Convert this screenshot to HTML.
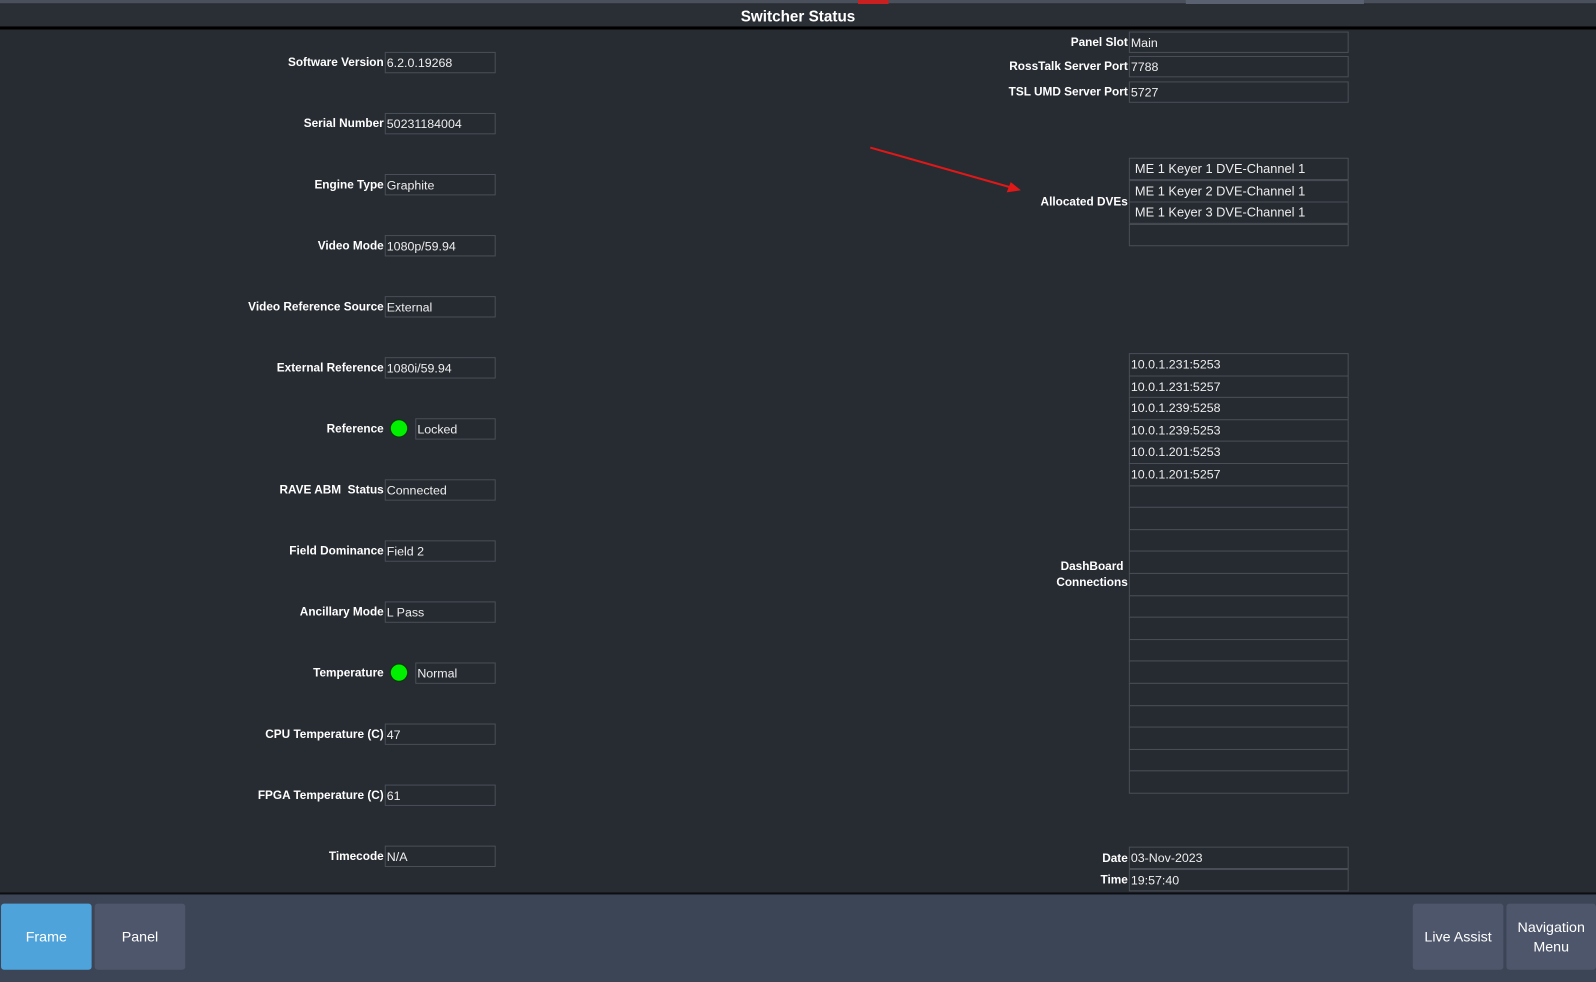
<!DOCTYPE html>
<html><head><meta charset="utf-8"><style>
html,body{margin:0;padding:0;width:1596px;height:982px;overflow:hidden;background:#272b32;}
#w{position:absolute;left:0;top:0;width:1568px;height:965px;transform:scale(1.01786,1.0176);transform-origin:0 0;background:#272b32;font-family:"Liberation Sans",sans-serif;color:#fff;}
.a{position:absolute;}
.lbl{position:absolute;font-weight:bold;font-size:11.6px;text-align:right;white-space:nowrap;line-height:14px;}
.f{position:absolute;box-sizing:border-box;border:1px solid #4a4f57;background:#262a31;font-size:12.2px;color:#eee;line-height:20px;padding-left:1px;white-space:nowrap;}
.dot{position:absolute;width:18px;height:18px;border-radius:50%;background:#00f000;border:1px solid #0a3a0a;box-sizing:border-box;}
.btn{position:absolute;top:888px;height:65px;width:89px;border-radius:3px;background:#4e566b;font-size:14px;color:#fff;display:flex;align-items:center;justify-content:center;text-align:center;line-height:19px;}
</style></head><body><div id="w">
<div class="a" style="left:0;top:0;width:1568px;height:4px;background:#4b515c"></div>
<div class="a" style="left:0;top:3px;width:1568px;height:1px;background:#30343b"></div>
<div class="a" style="left:843px;top:0;width:30px;height:4px;background:#c82020"></div>
<div class="a" style="left:1165px;top:0;width:175px;height:4px;background:#5a6170"></div>
<div class="a" style="left:0;top:4px;width:1568px;height:22px;background:#2a2e35"></div>
<div class="a" style="left:0;top:6px;width:1568px;text-align:center;font-weight:bold;font-size:15px;line-height:21px">Switcher Status</div>
<div class="a" style="left:0;top:26px;width:1568px;height:3px;background:#000"></div>

<div class="lbl" style="right:1191px;top:55px">Software Version</div><div class="f" style="left:378px;top:51px;width:109px;height:21px">6.2.0.19268</div>
<div class="lbl" style="right:1191px;top:115px">Serial Number</div><div class="f" style="left:378px;top:111px;width:109px;height:21px">50231184004</div>
<div class="lbl" style="right:1191px;top:175px">Engine Type</div><div class="f" style="left:378px;top:171px;width:109px;height:21px">Graphite</div>
<div class="lbl" style="right:1191px;top:235px">Video Mode</div><div class="f" style="left:378px;top:231px;width:109px;height:21px">1080p/59.94</div>
<div class="lbl" style="right:1191px;top:295px">Video Reference Source</div><div class="f" style="left:378px;top:291px;width:109px;height:21px">External</div>
<div class="lbl" style="right:1191px;top:355px">External Reference</div><div class="f" style="left:378px;top:351px;width:109px;height:21px">1080i/59.94</div>
<div class="lbl" style="right:1191px;top:415px">Reference</div><div class="dot" style="left:383px;top:412px"></div><div class="f" style="left:408px;top:411px;width:79px;height:21px">Locked</div>
<div class="lbl" style="right:1191px;top:475px">RAVE ABM&nbsp; Status</div><div class="f" style="left:378px;top:471px;width:109px;height:21px">Connected</div>
<div class="lbl" style="right:1191px;top:535px">Field Dominance</div><div class="f" style="left:378px;top:531px;width:109px;height:21px">Field 2</div>
<div class="lbl" style="right:1191px;top:595px">Ancillary Mode</div><div class="f" style="left:378px;top:591px;width:109px;height:21px">L Pass</div>
<div class="lbl" style="right:1191px;top:655px">Temperature</div><div class="dot" style="left:383px;top:652px"></div><div class="f" style="left:408px;top:651px;width:79px;height:21px">Normal</div>
<div class="lbl" style="right:1191px;top:715px">CPU Temperature (C)</div><div class="f" style="left:378px;top:711px;width:109px;height:21px">47</div>
<div class="lbl" style="right:1191px;top:775px">FPGA Temperature (C)</div><div class="f" style="left:378px;top:771px;width:109px;height:21px">61</div>
<div class="lbl" style="right:1191px;top:835px">Timecode</div><div class="f" style="left:378px;top:831px;width:109px;height:21px">N/A</div>

<div class="lbl" style="right:460px;top:35px">Panel Slot</div><div class="f" style="left:1109px;top:31px;width:216px;height:21px">Main</div>
<div class="lbl" style="right:460px;top:59px">RossTalk Server Port</div><div class="f" style="left:1109px;top:55px;width:216px;height:21px">7788</div>
<div class="lbl" style="right:460px;top:84px">TSL UMD Server Port</div><div class="f" style="left:1109px;top:80px;width:216px;height:21px">5727</div>

<svg class="a" style="left:850px;top:140px" width="160" height="52"><line x1="5" y1="5" x2="146" y2="45" stroke="#e01818" stroke-width="2"/><polygon points="153,47 139,49 143,39" fill="#e01818"/></svg>
<div class="lbl" style="right:460px;top:192px">Allocated DVEs</div>
<div class="f" style="left:1109px;top:155px;width:216px;height:22px;padding-left:5px;font-size:12.6px;line-height:21px">ME 1 Keyer 1 DVE-Channel 1</div>
<div class="f" style="left:1109px;top:177px;width:216px;height:22px;padding-left:5px;font-size:12.6px;line-height:21px">ME 1 Keyer 2 DVE-Channel 1</div>
<div class="f" style="left:1109px;top:198px;width:216px;height:22px;padding-left:5px;font-size:12.6px;line-height:21px">ME 1 Keyer 3 DVE-Channel 1</div>
<div class="f" style="left:1109px;top:220px;width:216px;height:22px"></div>

<div class="lbl" style="right:460px;top:549px;text-align:center;line-height:16px">DashBoard<br>Connections</div>
<div id="dash"></div>

<div class="lbl" style="right:460px;top:837px">Date</div><div class="f" style="left:1109px;top:832px;width:216px;height:22px;line-height:21px">03-Nov-2023</div>
<div class="lbl" style="right:460px;top:858px">Time</div><div class="f" style="left:1109px;top:854px;width:216px;height:22px;line-height:21px">19:57:40</div>

<div class="a" style="left:0;top:877px;width:1568px;height:2px;background:#0c0e12"></div>
<div class="a" style="left:0;top:879px;width:1568px;height:86px;background:#3c4555"></div>
<div class="btn" style="left:1px;background:#4fa3db">Frame</div>
<div class="btn" style="left:93px">Panel</div>
<div class="btn" style="left:1388px">Live Assist</div>
<div class="btn" style="left:1480px;width:88px">Navigation<br>Menu</div>
</div>
<script>
var v=["10.0.1.231:5253","10.0.1.231:5257","10.0.1.239:5258","10.0.1.239:5253","10.0.1.201:5253","10.0.1.201:5257"],h="";
for(var i=0;i<20;i++){var t=347+i*21.6;h+='<div class="f" style="left:1109px;top:'+t+'px;width:216px;height:22.6px;line-height:21px">'+(v[i]||"")+'</div>';}
document.getElementById("dash").outerHTML=h;
</script>
</body></html>
